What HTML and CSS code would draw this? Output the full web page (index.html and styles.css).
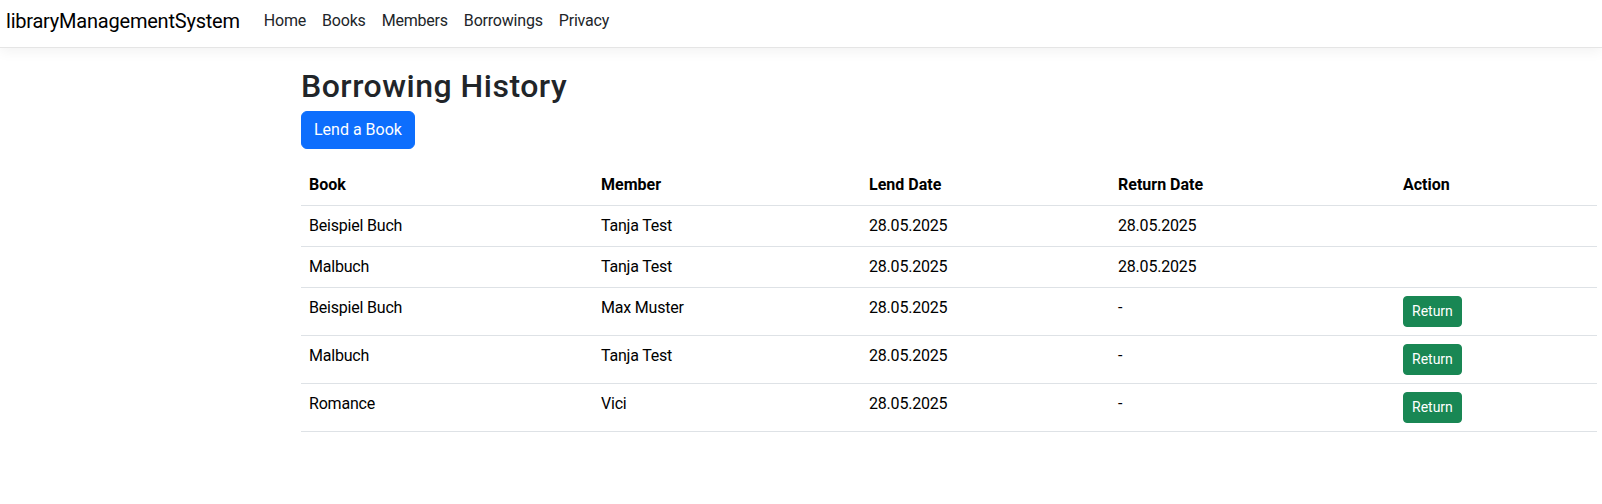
FILE: index.html
```html
<!DOCTYPE html>
<html lang="en">
<head>
<meta charset="utf-8">
<title>Borrowing History - libraryManagementSystem</title>
<link rel="stylesheet" href="styles.css">
</head>
<body>
<header class="navbar">
  <a class="brand" href="#">libraryManagementSystem</a>
  <nav class="nav">
    <a class="nav-link" href="#">Home</a>
    <a class="nav-link" href="#">Books</a>
    <a class="nav-link" href="#">Members</a>
    <a class="nav-link" href="#">Borrowings</a>
    <a class="nav-link" href="#">Privacy</a>
  </nav>
</header>
<main class="main">
  <h2 class="title">Borrowing History</h2>
  <a class="btn btn-primary" href="#">Lend a Book</a>
  <table class="table">
    <colgroup>
      <col class="c-book"><col class="c-member"><col class="c-lend"><col class="c-return"><col class="c-action">
    </colgroup>
    <thead>
      <tr><th>Book</th><th>Member</th><th>Lend Date</th><th>Return Date</th><th>Action</th></tr>
    </thead>
    <tbody>
      <tr><td>Beispiel Buch</td><td>Tanja Test</td><td>28.05.2025</td><td>28.05.2025</td><td></td></tr>
      <tr><td>Malbuch</td><td>Tanja Test</td><td>28.05.2025</td><td>28.05.2025</td><td></td></tr>
      <tr><td>Beispiel Buch</td><td>Max Muster</td><td>28.05.2025</td><td>-</td><td><button class="btn btn-sm btn-success" type="button">Return</button></td></tr>
      <tr><td>Malbuch</td><td>Tanja Test</td><td>28.05.2025</td><td>-</td><td><button class="btn btn-sm btn-success" type="button">Return</button></td></tr>
      <tr><td>Romance</td><td>Vici</td><td>28.05.2025</td><td>-</td><td><button class="btn btn-sm btn-success" type="button">Return</button></td></tr>
    </tbody>
  </table>
</main>
</body>
</html>
```
FILE: styles.css
```css
* { box-sizing: border-box; }
html, body { margin: 0; padding: 0; background: #fff; }
body {
  font-family: "Segoe UI", Roboto, "Liberation Sans", sans-serif;
  font-size: 16px;
  line-height: 1.5;
  color: #212529;
}
a { text-decoration: none; }

.navbar {
  display: flex;
  align-items: center;
  height: 48px;
  padding: 9px 6px 14px;
  border-bottom: 1px solid #e5e5e5;
  box-shadow: 0 4px 12px rgba(0, 0, 0, 0.05);
  background: #fff;
}
.brand {
  font-size: 20px;
  line-height: 24px;
  color: #000;
  margin-right: 16px;
  letter-spacing: -0.22px;
}
.nav { display: flex; }
.nav-link {
  padding: 0 8px;
  line-height: 24px;
  color: #212529;
  letter-spacing: -0.2px;
}

.main {
  margin: 17px 5px 0 301px;
}
.title {
  margin: 0 0 6px;
  padding-top: 2px;
  font-size: 32px;
  font-weight: 500;
  line-height: 1.2;
  letter-spacing: 0.5px;
  color: #212529;
}

.btn {
  display: inline-block;
  font-family: inherit;
  font-size: 16px;
  line-height: 24px;
  padding: 6px 12px;
  border: 1px solid transparent;
  border-radius: 6px;
  color: #fff;
  cursor: pointer;
}
.btn-primary { background: #0d6efd; border-color: #0d6efd; }
.btn-success { background: #198754; border-color: #198754; }
.btn-sm {
  font-size: 14px;
  line-height: 21px;
  padding: 4px 8px;
  border-radius: 4px;
}

.table {
  width: 1296px;
  margin-top: 16px;
  border-collapse: collapse;
  table-layout: fixed;
  color: #000;
}
.c-book { width: 292px; }
.c-member { width: 268px; }
.c-lend { width: 249px; }
.c-return { width: 285px; }
.c-action { width: 202px; }
.table th, .table td {
  padding: 8px;
  text-align: left;
  vertical-align: top;
  border-bottom: 1px solid #dee2e6;
}
.table td { letter-spacing: -0.2px; }
.table th { font-weight: 700; vertical-align: bottom; }
```
